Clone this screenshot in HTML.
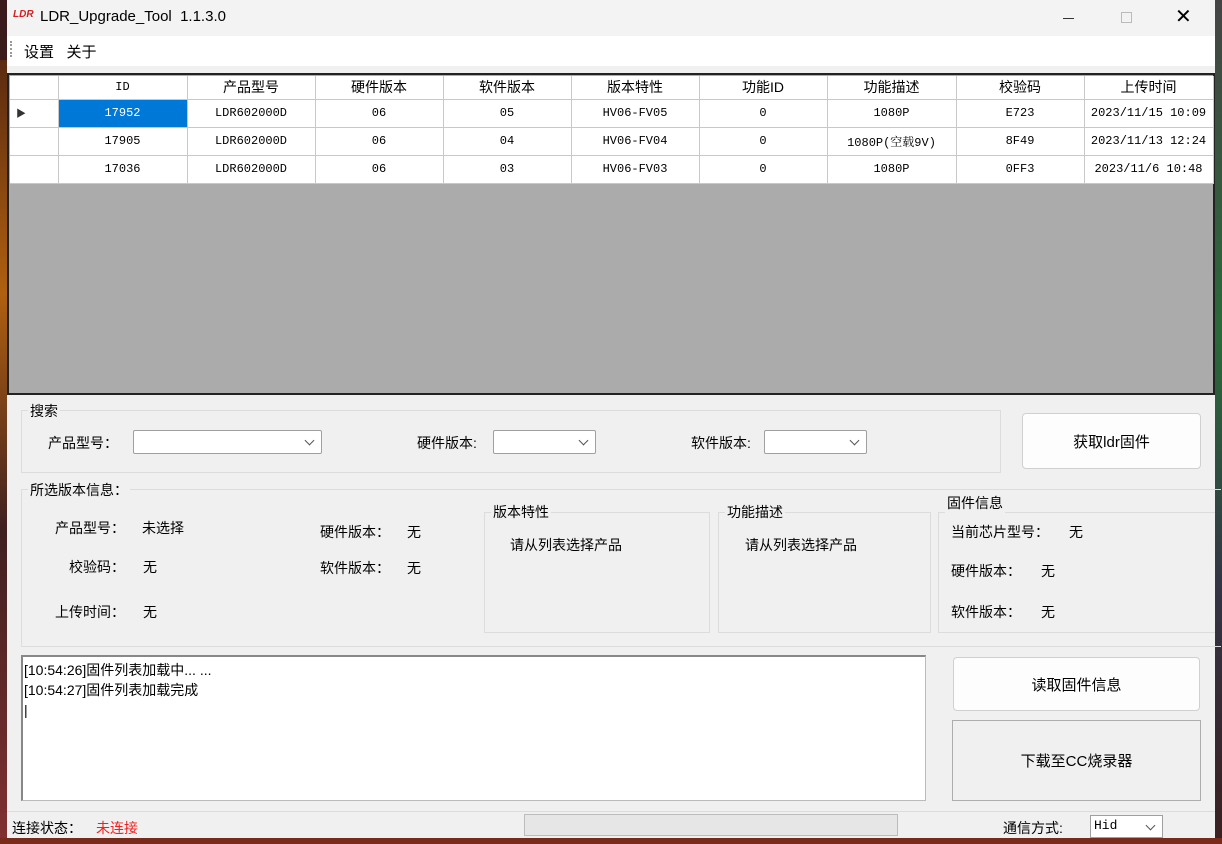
<!DOCTYPE html>
<html><head><meta charset="utf-8"><style>
*{box-sizing:border-box;margin:0;padding:0}
body{width:1222px;height:844px;overflow:hidden;background:#3a1a1a;position:relative;font-family:"Liberation Sans","Noto Sans CJK SC",sans-serif;font-size:14px;color:#000}
.a{position:absolute}
.win{left:7px;top:0;width:1208px;height:838px;background:#f0f0f0}
.t{white-space:nowrap}
.grid td{border-right:1px solid #c8c8c8;border-bottom:1px solid #c8c8c8;text-align:center;font-family:"Liberation Mono","Noto Serif CJK SC",monospace;font-size:12px;background:#fff;height:28px;padding:0}
.grid tr.h td{font-family:"Liberation Sans","Noto Sans CJK SC",sans-serif;font-size:14px;height:23px;}
.grp{border:1px solid #dcdcdc}
.lbl{background:#f0f0f0;padding:0 2px}
.cb{background:#fff;border:1px solid #a0a0a0;border-radius:2px;height:24px}
.cb:after{content:"";position:absolute;right:8px;top:6px;width:6px;height:6px;border-right:1px solid #555;border-bottom:1px solid #555;transform:rotate(45deg)}
.btn{background:#fdfdfd;border:1px solid #d0d0d0;border-radius:4px;display:flex;align-items:center;justify-content:center;font-size:15px}
</style></head><body>
<div class="a" style="left:0;top:60px;width:7px;height:780px;background:linear-gradient(#5a2a10,#b06010 30%,#402020 60%,#803030)"></div>
<div class="a" style="left:1215px;top:0;width:7px;height:844px;background:linear-gradient(#444,#2a6a3a 40%,#334 70%,#3a2020)"></div>
<div class="a" style="left:0;top:838px;width:1222px;height:6px;background:#7a2a1a"></div>
<div class="a win">
 <div class="a" style="left:0;top:0;width:1208px;height:36px;background:#f3f3f3"></div>
 <div class="a t" style="left:6px;top:9px;font-size:10px;font-weight:bold;color:#d42020;font-style:italic">LDR</div>
 <div class="a t" style="left:33px;top:8px;font-size:15px">LDR_Upgrade_Tool&nbsp; 1.1.3.0</div>
 <div class="a" style="left:1056px;top:18px;width:11px;height:1px;background:#333"></div>
 <div class="a" style="left:1114px;top:12px;width:11px;height:11px;border:1px solid #bbb"></div>
 <div class="a t" style="left:1168px;top:4px;font-size:20px;font-weight:300">✕</div>
 <div class="a" style="left:0;top:36px;width:1208px;height:30px;background:#fff"></div>
 <div class="a" style="left:3px;top:41px;width:2px;height:16px;border-left:2px dotted #999"></div>
 <div class="a t" style="left:17px;top:41px;font-size:15px">设置&nbsp;&nbsp; 关于</div>
 <div class="a" style="left:0;top:73px;width:1208px;height:322px;background:#ababab;border:2px solid #222;border-top-width:2px"></div>
 <table class="a grid" style="left:3px;top:76px;border-collapse:collapse;table-layout:fixed;width:1203px">
  <colgroup><col style="width:48px"><col style="width:129px"><col style="width:128px"><col style="width:128px"><col style="width:128px"><col style="width:128px"><col style="width:128px"><col style="width:129px"><col style="width:128px"><col style="width:129px"></colgroup>
  <tr class="h"><td></td><td style="font-family:'Liberation Mono',monospace;font-size:12px">ID</td><td>产品型号</td><td>硬件版本</td><td>软件版本</td><td>版本特性</td><td>功能ID</td><td>功能描述</td><td>校验码</td><td>上传时间</td></tr>
  <tr><td style="text-align:left;padding-left:6px;font-size:10px;color:#333">▶</td><td style="background:#0078d7;color:#fff">17952</td><td>LDR602000D</td><td>06</td><td>05</td><td>HV06-FV05</td><td>0</td><td>1080P</td><td>E723</td><td>2023/11/15 10:09</td></tr>
  <tr><td></td><td>17905</td><td>LDR602000D</td><td>06</td><td>04</td><td>HV06-FV04</td><td>0</td><td>1080P(空载9V)</td><td>8F49</td><td>2023/11/13 12:24</td></tr>
  <tr><td></td><td>17036</td><td>LDR602000D</td><td>06</td><td>03</td><td>HV06-FV03</td><td>0</td><td>1080P</td><td>0FF3</td><td>2023/11/6 10:48</td></tr>
 </table>
 <div class="a grp" style="left:14px;top:410px;width:980px;height:63px"></div>
 <div class="a t lbl" style="left:21px;top:401px">搜索</div>
 <div class="a t" style="left:41px;top:433px">产品型号：</div>
 <div class="a cb" style="left:126px;top:430px;width:189px"></div>
 <div class="a t" style="left:410px;top:433px">硬件版本:</div>
 <div class="a cb" style="left:486px;top:430px;width:103px"></div>
 <div class="a t" style="left:684px;top:433px">软件版本:</div>
 <div class="a cb" style="left:757px;top:430px;width:103px"></div>
 <div class="a btn" style="left:1015px;top:413px;width:179px;height:56px">获取ldr固件</div>
 <div class="a grp" style="left:14px;top:489px;width:1200px;height:158px;border-right:none"></div>
 <div class="a t lbl" style="left:21px;top:480px">所选版本信息：</div>
 <div class="a t" style="left:48px;top:518px">产品型号：</div><div class="a t" style="left:135px;top:518px">未选择</div>
 <div class="a t" style="left:62px;top:557px">校验码：</div><div class="a t" style="left:136px;top:557px">无</div>
 <div class="a t" style="left:48px;top:602px">上传时间：</div><div class="a t" style="left:136px;top:602px">无</div>
 <div class="a t" style="left:313px;top:522px">硬件版本：</div><div class="a t" style="left:400px;top:522px">无</div>
 <div class="a t" style="left:313px;top:558px">软件版本：</div><div class="a t" style="left:400px;top:558px">无</div>
 <div class="a grp" style="left:477px;top:512px;width:226px;height:121px"></div>
 <div class="a t lbl" style="left:484px;top:502px">版本特性</div>
 <div class="a t" style="left:503px;top:535px">请从列表选择产品</div>
 <div class="a grp" style="left:711px;top:512px;width:213px;height:121px"></div>
 <div class="a t lbl" style="left:718px;top:502px">功能描述</div>
 <div class="a t" style="left:738px;top:535px">请从列表选择产品</div>
 <div class="a grp" style="left:931px;top:512px;width:277px;height:121px;border-right:none"></div>
 <div class="a t lbl" style="left:938px;top:493px">固件信息</div>
 <div class="a t" style="left:944px;top:522px">当前芯片型号：</div><div class="a t" style="left:1062px;top:522px">无</div>
 <div class="a t" style="left:944px;top:561px">硬件版本：</div><div class="a t" style="left:1034px;top:561px">无</div>
 <div class="a t" style="left:944px;top:602px">软件版本：</div><div class="a t" style="left:1034px;top:602px">无</div>
 <div class="a" style="left:14px;top:655px;width:905px;height:146px;background:#fff;border:1px solid #bbb;border-top:2px solid #888;border-left:2px solid #888"></div>
 <div class="a t" style="left:17px;top:660px;line-height:20px">[10:54:26]固件列表加载中... ...<br>[10:54:27]固件列表加载完成<br>|</div>
 <div class="a btn" style="left:946px;top:657px;width:247px;height:54px">读取固件信息</div>
 <div class="a btn" style="left:945px;top:720px;width:249px;height:81px;border:1px solid #adadad;border-radius:0;background:#f0f0f0">下载至CC烧录器</div>
 <div class="a" style="left:0;top:811px;width:1208px;height:1px;background:#dcdcdc"></div>
 <div class="a t" style="left:5px;top:818px">连接状态：</div>
 <div class="a t" style="left:89px;top:818px;color:#f02020">未连接</div>
 <div class="a" style="left:517px;top:814px;width:374px;height:22px;background:#e6e6e6;border:1px solid #bcbcbc"></div>
 <div class="a t" style="left:996px;top:818px">通信方式:</div>
 <div class="a cb" style="left:1083px;top:815px;width:73px;height:23px;border-radius:0"><span style="position:absolute;left:3px;top:2px;font-family:'Liberation Mono',monospace;font-size:13px">Hid</span></div>
</div>
</body></html>
